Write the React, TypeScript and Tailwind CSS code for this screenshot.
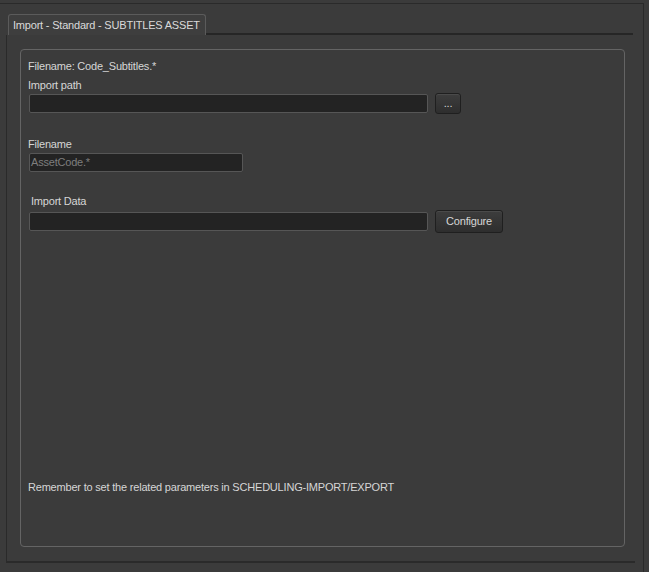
import React from "react";

const font = { fontFamily: '"Liberation Sans", Arial, sans-serif' };

function Input({ w, placeholder }: { w: string; placeholder?: string }) {
  return (
    <div
      className={`${w} h-[19px] bg-[#232323] border border-[#565656] rounded-[2px] flex items-center pl-[1px] text-[#7e7e7e] text-[11px] leading-none`}
    >
      {placeholder}
    </div>
  );
}

function Btn({ w, h, children }: { w: string; h: string; children: React.ReactNode }) {
  return (
    <div
      className={`${w} ${h} rounded-[3px] border border-[#1f1f1f] bg-gradient-to-b from-[#3d3d3d] to-[#2e2e2e] shadow-[inset_0_1px_0_#4a4a4a] flex items-center justify-center text-[#d6d6d6] text-[11px] leading-none`}
    >
      {children}
    </div>
  );
}

export default function App() {
  return (
    <div
      className="w-[649px] h-[572px] bg-[#3b3b3b] overflow-hidden text-[#d6d6d6] text-[11px] leading-[13px] tracking-[-0.2px]"
      style={font}
    >
      <div className="pt-[3px] h-full">
        <div className="h-[569px] w-[644px] border-t border-r border-[#2a2a2a] flex flex-col">
          {/* tab row */}
          <div className="flex items-end h-[31px] pl-[8px]">
            <div className="h-[21px] w-[198px] border border-b-0 border-[#5b5b5b] rounded-t-[3px] bg-[#3e3e3e] pl-[4px] flex items-center whitespace-nowrap text-[#dadada]">
              Import - Standard - SUBTITLES ASSET
            </div>
            <div className="flex-1 h-[21px] mr-[10px] border-b-2 border-[#262626]" />
          </div>
          {/* pane */}
          <div className="ml-[6px] w-[629px] h-[528px] border-l border-b-2 border-[#2a2a2a] pl-[13px] pt-[14px]">
            <div className="w-[605px] h-[498px] border border-[#646464] rounded-[4px] pl-[7px] pt-[10px] flex flex-col">
              <div>Filename: Code_Subtitles.*</div>
              <div className="mt-[6px]">Import path</div>
              <div className="mt-[1px] flex items-center gap-[7px] ml-[1px] h-[21px]">
                <Input w="w-[399px]" />
                <Btn w="w-[26px]" h="h-[21px]">...</Btn>
              </div>
              <div className="mt-[24px]">Filename</div>
              <div className="mt-[2px] ml-[1px]">
                <Input w="w-[214px]" placeholder="AssetCode.*" />
              </div>
              <div className="mt-[23px] ml-[3px]">Import Data</div>
              <div className="mt-[2px] flex items-center gap-[7px] ml-[1px] h-[23px]">
                <Input w="w-[399px]" />
                <Btn w="w-[68px]" h="h-[23px]">Configure</Btn>
              </div>
              <div className="mt-[248px]">
                Remember to set the related parameters in SCHEDULING-IMPORT/EXPORT
              </div>
            </div>
          </div>
        </div>
      </div>
    </div>
  );
}
